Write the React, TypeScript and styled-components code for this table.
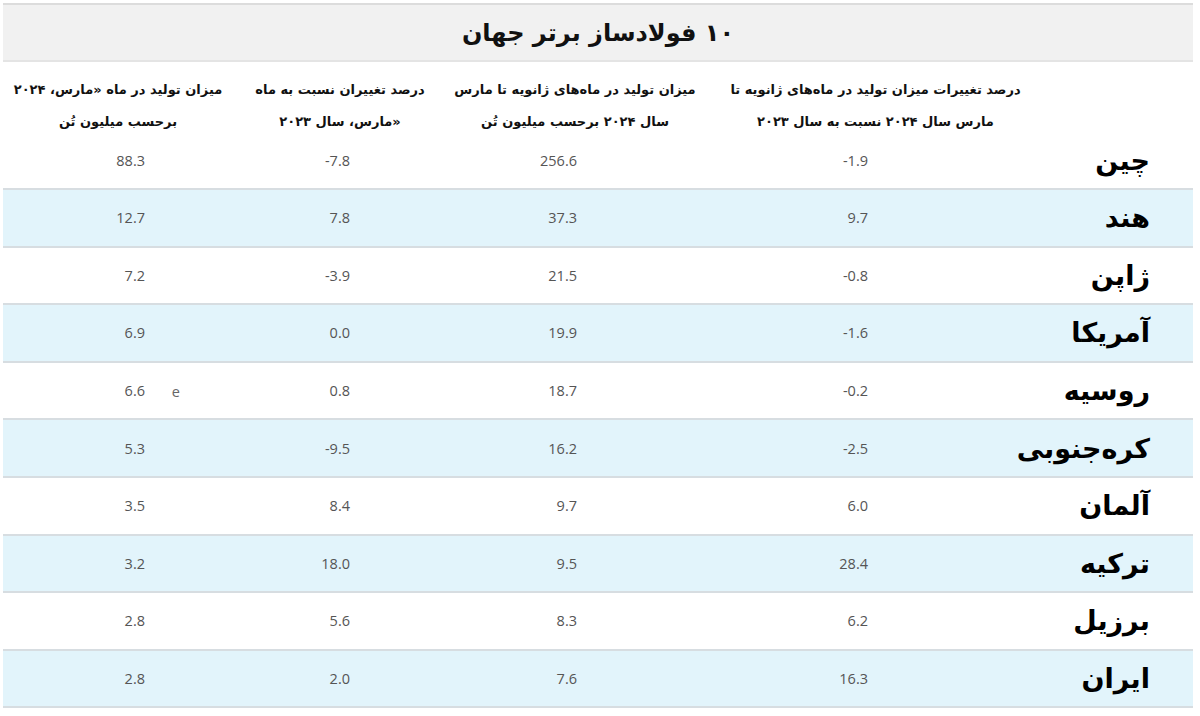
import React from 'react';
import styled, { createGlobalStyle } from 'styled-components';

const GlobalStyle = createGlobalStyle`
  html, body {
    margin: 0;
    padding: 0;
    background: #ffffff;
  }
`;

const Page = styled.div`
  width: 1190px;
  padding: 3px;
  direction: rtl;
  font-family: "DejaVu Sans", "Noto Sans", sans-serif;
`;

const TitleBar = styled.div`
  height: 55px;
  display: flex;
  align-items: center;
  justify-content: center;
  background: #f1f1f1;
  border-top: 2px solid #dcdcdc;
  border-bottom: 2px solid #e4e4e4;
`;

const Title = styled.h1`
  margin: 0;
  font-size: 24px;
  font-weight: bold;
  color: #111;
`;

const COLS = '175px 315px 270px 200px 230px';

const HeaderRow = styled.div`
  display: grid;
  grid-template-columns: ${COLS};
  height: 70.4px;
`;

const HeaderCell = styled.div<{ shift: number }>`
  display: flex;
  align-items: center;
  justify-content: center;
  padding-left: ${p => p.shift}px;
  padding-top: 12px;
  text-align: center;
  white-space: nowrap;
  font-size: 13px;
  font-weight: bold;
  line-height: 32px;
  color: #111;
`;

const Row = styled.div<{ striped: boolean }>`
  display: grid;
  grid-template-columns: ${COLS};
  height: 55.6px;
  background: ${p => (p.striped ? '#e2f4fb' : '#ffffff')};
  border-bottom: 2px solid #d7dde1;
`;

const Country = styled.div`
  display: flex;
  align-items: center;
  padding-right: 43px;
  font-size: 27px;
  font-weight: bold;
  color: #000;
`;

const ValueCell = styled.div<{ pad: number }>`
  position: relative;
  display: flex;
  align-items: center;
  padding-right: ${p => p.pad}px;
  font-family: "Open Sans", "Liberation Sans", sans-serif;
  font-size: 14.5px;
  color: #555;
  direction: rtl;
`;

const Num = styled.span`
  direction: ltr;
`;

const Note = styled.span`
  position: absolute;
  right: 53px;
  top: 50%;
  transform: translateY(-50%);
  font-family: "Open Sans", "Liberation Sans", sans-serif;
  font-size: 14.5px;
  color: #666;
`;

const headers = [
  { shift: 30, lines: ['درصد تغییرات میزان تولید در ماه‌های ژانویه تا', 'مارس سال ۲۰۲۴ نسبت به سال ۲۰۲۳'] },
  { shift: 14, lines: ['میزان تولید در ماه‌های ژانویه تا مارس', 'سال ۲۰۲۴ برحسب میلیون تُن'] },
  { shift: 14, lines: ['درصد تغییران نسبت به ماه', '«مارس، سال ۲۰۲۳'] },
  { shift: 0, lines: ['میزان تولید در ماه  «مارس، ۲۰۲۴', 'برحسب میلیون تُن'] },
];

const pads = [150, 126, 83, 88];

const rows: { name: string; values: string[]; note?: string }[] = [
  { name: 'چین', values: ['-1.9', '256.6', '-7.8', '88.3'] },
  { name: 'هند', values: ['9.7', '37.3', '7.8', '12.7'] },
  { name: 'ژاپن', values: ['-0.8', '21.5', '-3.9', '7.2'] },
  { name: 'آمریکا', values: ['-1.6', '19.9', '0.0', '6.9'] },
  { name: 'روسیه', values: ['-0.2', '18.7', '0.8', '6.6'], note: 'e' },
  { name: 'کره‌جنوبی', values: ['-2.5', '16.2', '-9.5', '5.3'] },
  { name: 'آلمان', values: ['6.0', '9.7', '8.4', '3.5'] },
  { name: 'ترکیه', values: ['28.4', '9.5', '18.0', '3.2'] },
  { name: 'برزیل', values: ['6.2', '8.3', '5.6', '2.8'] },
  { name: 'ایران', values: ['16.3', '7.6', '2.0', '2.8'] },
];

export default function App() {
  return (
    <>
      <GlobalStyle />
      <Page>
        <TitleBar>
          <Title>۱۰ فولادساز برتر جهان</Title>
        </TitleBar>
        <HeaderRow>
          <div />
          {headers.map((h, i) => (
            <HeaderCell key={i} shift={h.shift}>
              <div>
                {h.lines[0]}
                <br />
                {h.lines[1]}
              </div>
            </HeaderCell>
          ))}
        </HeaderRow>
        {rows.map((r, i) => (
          <Row key={r.name} striped={i % 2 === 1}>
            <Country>{r.name}</Country>
            {r.values.map((v, j) => (
              <ValueCell key={j} pad={pads[j]}>
                <Num>{v}</Num>
                {j === 3 && r.note && <Note>{r.note}</Note>}
              </ValueCell>
            ))}
          </Row>
        ))}
      </Page>
    </>
  );
}
